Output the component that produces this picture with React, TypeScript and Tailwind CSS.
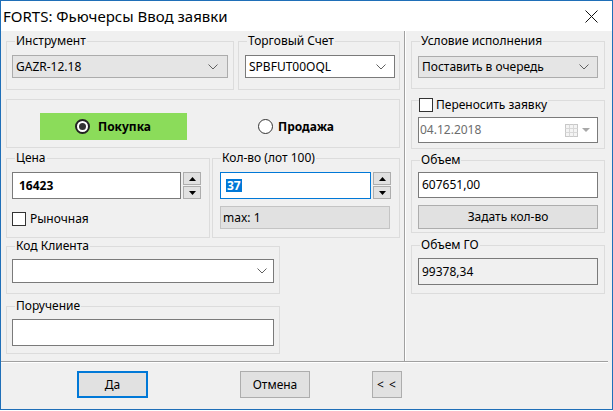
import React from 'react';

const font = { fontFamily: '"Noto Sans", "Liberation Sans", sans-serif' };

const Group: React.FC<{ label?: React.ReactNode; className?: string; labelClass?: string; children?: React.ReactNode }> = ({
  label,
  className,
  labelClass,
  children
}) => (
  <div className={`relative border border-[#dcdcdc] ${className ?? ''}`}>
    {label && (
      <span
        className={`absolute left-[8px] px-[1px] bg-[#f0f0f0] leading-4 text-[12px] text-black ${labelClass ?? '-top-[9px]'}`}
      >
        {label}
      </span>
    )}
    {children}
  </div>
);

const Chevron = () => (
  <svg width="10" height="6" viewBox="0 0 10 6" className="shrink-0">
    <polyline points="0.5,0.5 5,5 9.5,0.5" fill="none" stroke="#606060" strokeWidth="1" />
  </svg>
);

const Spin = () => (
  <div className="flex flex-col w-[18px] h-[27px] gap-[1px] shrink-0">
    <div className="flex-1 border border-[#adadad] bg-[#e1e1e1] flex items-center justify-center">
      <svg width="7" height="4" viewBox="0 0 7 4">
        <polygon points="3.5,0 7,4 0,4" fill="#000" />
      </svg>
    </div>
    <div className="flex-1 border border-[#adadad] bg-[#e1e1e1] flex items-center justify-center">
      <svg width="7" height="4" viewBox="0 0 7 4">
        <polygon points="0,0 7,0 3.5,4" fill="#000" />
      </svg>
    </div>
  </div>
);

const Radio: React.FC<{ checked?: boolean }> = ({ checked }) => (
  <span
    className={`w-[15px] h-[15px] rounded-full bg-white flex items-center justify-center shrink-0 ${
      checked ? 'border-2 border-[#222]' : 'border border-[#333]'
    }`}
  >
    {checked && <span className="w-[7px] h-[7px] rounded-full bg-[#333]" />}
  </span>
);

const Check = () => <span className="w-[14px] h-[14px] border border-[#333] bg-white shrink-0" />;

export default function App() {
  return (
    <div className="w-[613px] h-[411px] bg-white text-[12px] text-black" style={font}>
      <div className="h-[410px] border border-[#1f6fb8] flex flex-col bg-[#f0f0f0]">
        {/* title bar */}
        <div className="h-[30px] bg-white flex items-center justify-between pl-[2px] pr-[14px] shrink-0">
          <span className="text-[15px] leading-5">FORTS: Фьючерсы Ввод заявки</span>
          <svg width="13" height="13" viewBox="0 0 13 13">
            <path d="M0.5 0.5 L12.5 12.5 M12.5 0.5 L0.5 12.5" stroke="#111" strokeWidth="1" />
          </svg>
        </div>

        {/* body */}
        <div className="flex h-[330px] shrink-0">
          {/* left column */}
          <div className="w-[403px] pl-[5px] pt-[10px] flex flex-col">
            <div className="flex gap-[4px]">
              <Group label="Инструмент" className="w-[228px] h-[49px] pt-[13px] px-[5px]">
                <div className="h-[23px] border border-[#acacac] bg-[#e5e5e5] flex items-center justify-between pl-[3px] pr-[9px]">
                  <span>GAZR-12.18</span>
                  <Chevron />
                </div>
              </Group>
              <Group label="Торговый Счет" className="w-[162px] h-[49px] pt-[13px] pl-[6px] pr-[4px]">
                <div className="h-[23px] border border-[#7a7a7a] bg-white flex items-center justify-between pl-[3px] pr-[8px]">
                  <span>SPBFUT00OQL</span>
                  <Chevron />
                </div>
              </Group>
            </div>

            <Group className="mt-[9px] w-[394px] h-[49px] pt-[13px] flex">
              <div className="ml-[33px] w-[147px] h-[27px] bg-[#8bdc5a] flex items-center pl-[35px] gap-[8px]">
                <Radio checked />
                <span className="font-bold">Покупка</span>
              </div>
              <div className="ml-[71px] h-[27px] flex items-center gap-[5px]">
                <Radio />
                <span className="font-bold">Продажа</span>
              </div>
            </Group>

            <div className="flex gap-[2px] mt-[10px]">
              <Group label="Цена" className="w-[204px] h-[80px] pt-[13px] px-[5px]">
                <div className="flex gap-[2px]">
                  <div className="w-[169px] h-[27px] border border-[#7a7a7a] bg-white flex items-center pl-[6px] font-bold">
                    16423
                  </div>
                  <Spin />
                </div>
                <div className="flex items-center gap-[4px] mt-[11px]">
                  <Check />
                  <span>Рыночная</span>
                </div>
              </Group>
              <Group label="Кол-во (лот 100)" className="w-[188px] h-[80px] pt-[13px] pl-[7px]">
                <div className="flex gap-[2px]">
                  <div className="w-[151px] h-[27px] border border-[#0078d7] bg-white flex items-center pl-[5px]">
                    <span className="bg-[#0078d7] text-white font-bold leading-[13px] px-[1px]">37</span>
                  </div>
                  <Spin />
                </div>
                <div className="mt-[7px] w-[170px] h-[23px] border border-[#c4c4c4] bg-[#e1e1e1] flex items-center pl-[2px]">
                  max: 1
                </div>
              </Group>
            </div>

            <Group label="Код Клиента" className="mt-[8px] w-[274px] h-[48px] pt-[12px] px-[5px]">
              <div className="h-[24px] border border-[#7a7a7a] bg-white flex items-center justify-end pr-[6px]">
                <Chevron />
              </div>
            </Group>

            <Group label="Поручение" className="mt-[12px] w-[274px] h-[48px] pt-[12px] px-[5px]">
              <div className="h-[27px] border border-[#7a7a7a] bg-white" />
            </Group>
          </div>

          {/* separator */}
          <div className="w-[2px] border-l border-[#a0a0a0] bg-white" />

          {/* right column */}
          <div className="w-[206px] pl-[5px] pt-[10px] flex flex-col">
            <Group label="Условие исполнения" className="w-[194px] h-[48px] pt-[14px] px-[6px]">
              <div className="h-[22px] border border-[#acacac] bg-[#e5e5e5] flex items-center justify-between pl-[3px] pr-[8px]">
                <span>Поставить в очередь</span>
                <Chevron />
              </div>
            </Group>

            <Group
              label={
                <span className="flex items-center gap-[3px] -ml-[2px]">
                  <Check />
                  <span>Переносить заявку</span>
                </span>
              }
              labelClass="-top-[4px]"
              className="mt-[11px] w-[194px] h-[49px] pt-[16px] px-[6px]"
            >
              <div className="h-[26px] border border-[#7a7a7a] bg-white flex items-center justify-between pl-[1px] pr-[7px]">
                <span className="text-[#6d6d6d]">04.12.2018</span>
                <span className="flex items-center gap-[4px]">
                  <svg width="13" height="13" viewBox="0 0 13 13">
                    <rect x="0.5" y="0.5" width="12" height="12" fill="#f4f4f4" stroke="#c8c8c8" />
                    <path d="M0.5 4.5 H12.5 M0.5 8.5 H12.5 M4.5 0.5 V12.5 M8.5 0.5 V12.5" stroke="#d8d8d8" />
                  </svg>
                  <svg width="8" height="4" viewBox="0 0 8 4">
                    <polygon points="0,0 8,0 4,4" fill="#a8a8a8" />
                  </svg>
                </span>
              </div>
            </Group>

            <Group label="Объем" className="mt-[11px] w-[194px] h-[73px] pt-[11px] px-[6px]">
              <div className="h-[26px] border border-[#7a7a7a] bg-white flex items-center pl-[3px]">607651,00</div>
              <div className="mt-[7px] h-[24px] border border-[#adadad] bg-[#e1e1e1] flex items-center justify-center">
                Задать кол-во
              </div>
            </Group>

            <Group label="Объем ГО" className="mt-[12px] w-[194px] h-[49px] pt-[12px] px-[6px]">
              <div className="h-[27px] border border-[#7a7a7a] bg-[#f0f0f0] flex items-center pl-[3px]">99378,34</div>
            </Group>
          </div>
        </div>

        {/* bottom separator */}
        <div className="w-[607px] h-[2px] border-t border-[#a0a0a0] bg-white shrink-0" />

        {/* buttons */}
        <div className="flex items-start pt-[8px] flex-1">
          <div className="ml-[76px] w-[71px] h-[27px] border-2 border-[#0078d7] bg-[#e1e1e1] flex items-center justify-center">
            Да
          </div>
          <div className="ml-[92px] w-[70px] h-[27px] border border-[#adadad] bg-[#e1e1e1] flex items-center justify-center">
            Отмена
          </div>
          <div className="ml-[62px] w-[30px] h-[27px] border border-[#adadad] bg-[#e1e1e1] flex items-center justify-center tracking-[1px]">
            &lt; &lt;
          </div>
        </div>
      </div>
    </div>
  );
}
